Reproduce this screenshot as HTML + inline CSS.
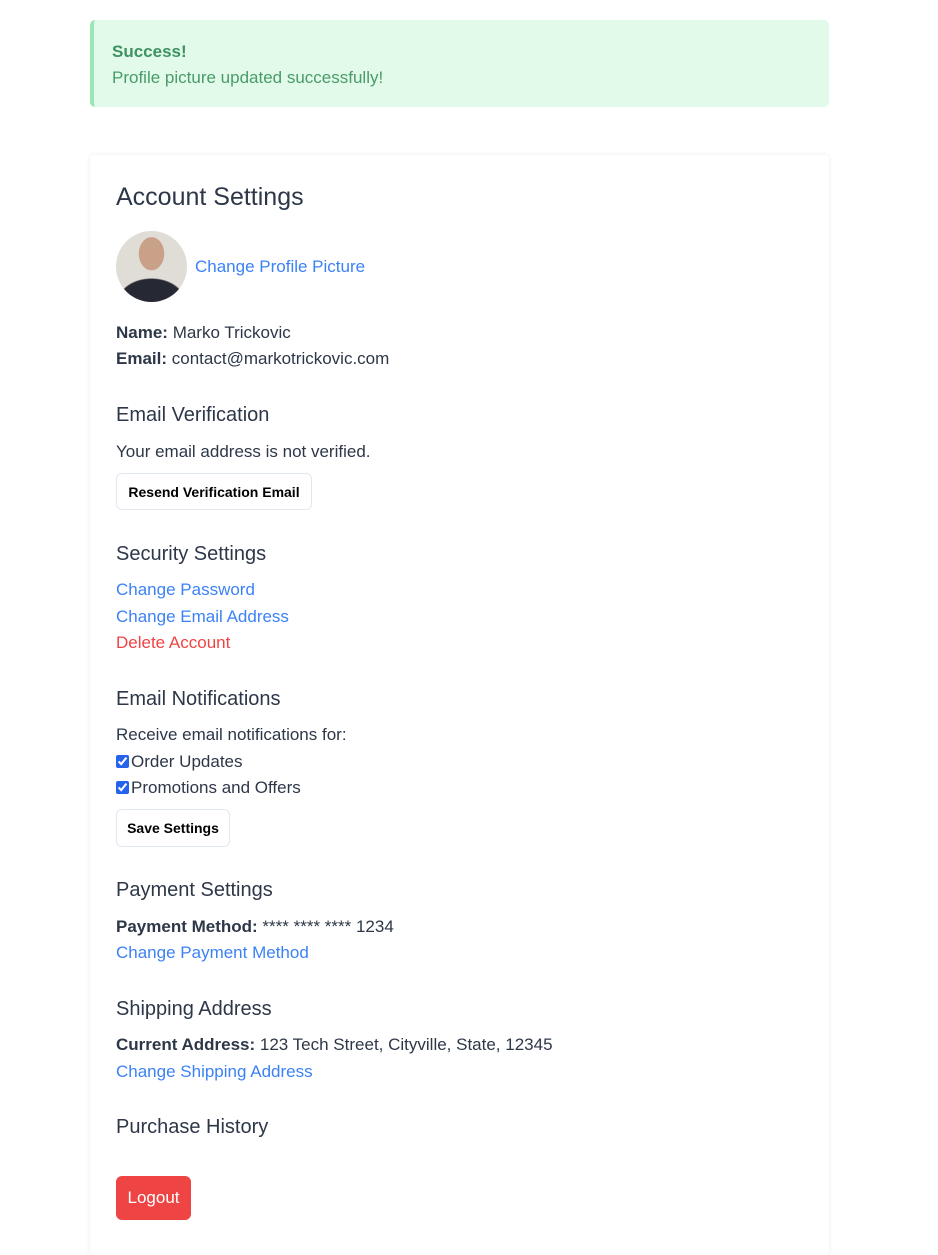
<!DOCTYPE html>
<html><head><style>
body{margin:0;background:#fff;font-family:"Liberation Sans",sans-serif;color:#2d3748;width:938px;height:1237px;overflow:hidden;position:relative}
.a{position:absolute;left:116px;font-size:17px;line-height:22px;white-space:nowrap}
.h{font-size:20px;color:#2d3748}
.l{color:#3b82f6}
b{font-weight:bold}
.btn{position:absolute;left:116px;border:1px solid #e2e8f0;border-radius:6px;background:#fff;font-size:14px;font-weight:bold;color:#000;box-sizing:border-box;display:flex;align-items:center;justify-content:center}
input{margin:0 2px 0 0;width:13px;height:13px;vertical-align:-1px;accent-color:#2563eb}
</style></head><body>
<div style="position:absolute;left:90px;top:20px;width:739px;height:87px;background:#e1fae9;border-left:4px solid #9ae6b4;border-radius:5px;box-sizing:border-box"></div>
<div class="a" style="left:112px;top:41px;color:#3f9162;font-weight:bold;font-size:17px">Success!</div>
<div class="a" style="left:112px;top:67px;color:#4a9b6a">Profile picture updated successfully!</div>
<div style="position:absolute;left:90px;top:155px;width:739px;height:1100px;background:#fff;box-shadow:0 0 6px rgba(0,0,0,0.08);border-radius:4px"></div>
<div class="a" style="top:183px;font-size:25px;line-height:28px">Account Settings</div>
<div style="position:absolute;left:116px;top:231px;width:71px;height:71px;border-radius:50%;background:radial-gradient(ellipse 13px 17px at 50% 32%,#c9a088 0 95%,transparent 100%),radial-gradient(ellipse 34px 24px at 50% 100%,#262833 0 95%,transparent 100%),#e0dcd6;overflow:hidden"></div>
<div class="a l" style="left:195px;top:256px">Change Profile Picture</div>
<div class="a" style="top:322px"><b>Name:</b> Marko Trickovic</div>
<div class="a" style="top:348px"><b>Email:</b> contact@markotrickovic.com</div>
<div class="a h" style="top:404px">Email Verification</div>
<div class="a" style="top:441px">Your email address is not verified.</div>
<div class="btn" style="top:473px;width:196px;height:37px">Resend Verification Email</div>
<div class="a h" style="top:543px">Security Settings</div>
<div class="a l" style="top:579px">Change Password</div>
<div class="a l" style="top:606px">Change Email Address</div>
<div class="a" style="top:632px;color:#ef4444">Delete Account</div>
<div class="a h" style="top:688px">Email Notifications</div>
<div class="a" style="top:724px">Receive email notifications for:</div>
<div class="a" style="top:751px"><input type="checkbox" checked>Order Updates</div>
<div class="a" style="top:777px"><input type="checkbox" checked>Promotions and Offers</div>
<div class="btn" style="top:809px;width:114px;height:38px">Save Settings</div>
<div class="a h" style="top:879px">Payment Settings</div>
<div class="a" style="top:916px"><b>Payment Method:</b> **** **** **** 1234</div>
<div class="a l" style="top:942px">Change Payment Method</div>
<div class="a h" style="top:998px">Shipping Address</div>
<div class="a" style="top:1034px"><b>Current Address:</b> 123 Tech Street, Cityville, State, 12345</div>
<div class="a l" style="top:1061px">Change Shipping Address</div>
<div class="a h" style="top:1116px">Purchase History</div>
<div style="position:absolute;left:116px;top:1176px;width:75px;height:44px;background:#ef4444;border-radius:6px;color:#fff;font-size:17px;display:flex;align-items:center;justify-content:center">Logout</div>
</body></html>
